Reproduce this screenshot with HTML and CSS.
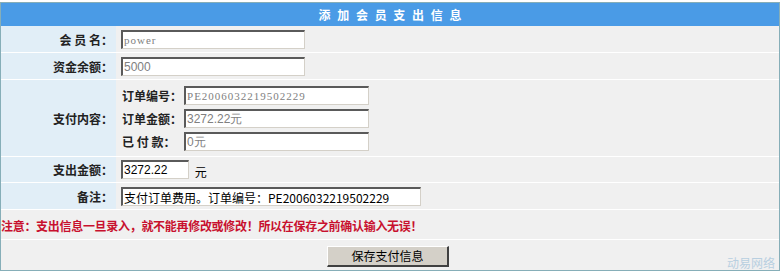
FILE: index.html
```html
<!DOCTYPE html>
<html lang="zh">
<head>
<meta charset="utf-8">
<link rel="stylesheet" href="styles.css">
</head>
<body>
<table class="form">
  <tr class="head"><td colspan="2">添 加 会 员 支 出 信 息</td></tr>
  <tr class="r27">
    <td class="lab">会 员 名：</td>
    <td class="val"><input class="ro serif w184" value="power" readonly></td>
  </tr>
  <tr class="r27">
    <td class="lab">资金余额：</td>
    <td class="val"><input class="ro w184" value="5000" readonly></td>
  </tr>
  <tr class="r77">
    <td class="lab">支付内容：</td>
    <td class="val">
      <table class="inner">
        <tr><td class="ilab">订单编号：</td><td><input class="ro serif w186" value="PE2006032219502229" readonly></td></tr>
        <tr><td class="ilab">订单金额：</td><td><input class="ro w186" value="3272.22元" readonly></td></tr>
        <tr><td class="ilab">已 付 款：</td><td><input class="ro w186" value="0元" readonly></td></tr>
      </table>
    </td>
  </tr>
  <tr class="r26">
    <td class="lab">支出金额：</td>
    <td class="val"><input class="ed w68" value="3272.22"> <span class="unit">元</span></td>
  </tr>
  <tr class="r27">
    <td class="lab">备注：</td>
    <td class="val"><input class="ed w300" value="支付订单费用。订单编号：PE2006032219502229"></td>
  </tr>
  <tr class="r30">
    <td colspan="2" class="note">注意：支出信息一旦录入，就不能再修改或修改！所以在保存之前确认输入无误！</td>
  </tr>
  <tr class="r31">
    <td colspan="2" class="btnrow"><button class="save">保存支付信息</button><span class="mark">动易网络</span></td>
  </tr>
</table>
</body>
</html>
```
FILE: styles.css
```css
html, body {
  margin: 0;
  padding: 0;
  background: #ffffff;
}
body {
  font-family: "Noto Sans CJK SC", "DejaVu Sans", sans-serif;
  font-size: 12px;
  color: #000;
}
.form {
  margin-top: 2px;
  width: 780px;
  border: 1px solid #86aeb8;
  border-collapse: separate;
  border-spacing: 0;
  background: #f0f0f0;
}
.form > tbody > tr > td {
  padding: 0;
  border-bottom: 1px solid #ffffff;
}
.form > tbody > tr:last-child > td {
  border-bottom: 0;
}
.head td {
  height: 23px;
  background: #4a9be6;
  color: #ffffff;
  font-weight: bold;
  text-align: center;
  letter-spacing: 2px;
  border-bottom: 0 !important;
  padding-left: 2px !important;
}
.r27 td { height: 26px; }
.r26 td { height: 25px; }
.r77 td { height: 76px; }
.r30 td { height: 27px; }
.r31 td { height: 28px; }
.lab {
  width: 112px;
  padding-right: 3px !important;
  background: #e1eef7;
  text-align: right;
  white-space: nowrap;
  font-weight: 600;
  color: #222;
}
.val {
  padding-left: 5px !important;
}
input {
  box-sizing: border-box;
  height: 19px;
  margin: 0;
  padding: 0 1px;
  border-width: 2px 1px 1px 2px;
  border-style: solid;
  border-color: #5a5a5a #d4d0c8 #d4d0c8 #5a5a5a;
  background: #ffffff;
  font-family: "Liberation Sans", Arial, sans-serif;
  font-size: 12px;
  vertical-align: middle;
}
input.ro { color: #808080; }
input.ed { color: #000; }
input.serif { font-family: "Liberation Serif", serif; font-size: 11px; letter-spacing: 1px; }
.w184 { width: 184px; }
.w186 { width: 185px; }
.w68 { width: 68px; }
.w300 { width: 300px; font-family: "Noto Sans CJK SC", sans-serif; }
.unit {
  display: inline-block;
  margin-left: 3px;
  vertical-align: middle;
  padding-top: 4px;
  font-size: 12px;
}
.inner {
  border-collapse: separate;
  border-spacing: 0;
}
.inner td {
  height: 23px;
  padding: 0;
}
.ilab {
  padding-left: 1px !important;
  padding-right: 2px !important;
  font-weight: 600;
  color: #222;
  white-space: nowrap;
}
.note {
  color: #c8102e;
  font-weight: bold;
  letter-spacing: -0.3px;
  padding-left: 0 !important;
  padding-top: 2px !important;
}
.btnrow {
  text-align: center;
  position: relative;
  padding-top: 2px !important;
}
.save {
  width: 122px;
  height: 21px;
  margin-left: -4px;
  padding: 0;
  background: #d4d0c8;
  border-width: 1px 2px 2px 1px;
  border-style: solid;
  border-color: #ffffff #404040 #404040 #ffffff;
  font-family: "Noto Sans CJK SC", sans-serif;
  font-size: 12px;
  color: #000;
}
.mark {
  position: absolute;
  right: 4px;
  bottom: 0;
  font-size: 12px;
  line-height: 14px;
  color: #b8cfe0;
}
```
